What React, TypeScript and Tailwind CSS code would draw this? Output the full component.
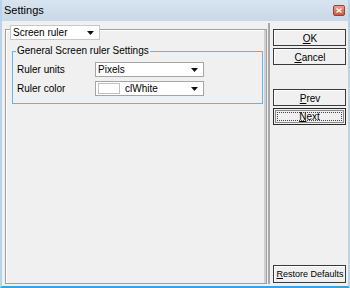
const font = { fontFamily: '"Liberation Sans", Arial, sans-serif' };

function Btn({ label, u, focused = false, className = "", text = "text-[10px]" }: { label: string; u: string; focused?: boolean; className?: string; text?: string }) {
  const rest = label.slice(u.length);
  if (focused) {
    return (
      <div className={"h-[17px] border border-[#2a2a2a] bg-[#f0f0f0] p-[1px] " + className}>
        <div className="h-full border border-[#8a8a8a] p-[1px]">
          <div className={"h-full flex items-center justify-center border border-dotted border-[#444] whitespace-nowrap " + text}>
            <span className="underline">{u}</span>
            {rest}
          </div>
        </div>
      </div>
    );
  }
  return (
    <div className={"h-[17px] border border-[#3a3a3a] bg-[#f0f0f0] " + className}>
      <div className={"h-full flex items-center justify-center text-black border-t border-l border-white whitespace-nowrap " + text}>
        <span className="underline">{u}</span>
        {rest}
      </div>
    </div>
  );
}

function Combo({ children, className = "" }: { children: React.ReactNode; className?: string }) {
  return (
    <div className={"h-[15px] flex items-center bg-white border border-[#a5a5a5] " + className}>
      <div className="flex-1 flex items-center text-[10px] pl-[2px]">{children}</div>
      <svg width="7" height="4" viewBox="0 0 7 4" className="mr-[5px]">
        <path d="M0 0h7L3.5 4z" fill="#111" />
      </svg>
    </div>
  );
}

export default function App() {
  return (
    <div style={font} className="w-[350px] h-[288px] flex flex-col bg-[#f0f0f0] border-l-2 border-r-2 border-b-2 border-l-[#b9d4ea] border-r-[#b9d4ea] border-b-[#3aa3dc] text-black">
      <div className="h-[21px] shrink-0 flex items-center justify-between bg-gradient-to-b from-[#d8e4f0] to-[#c9d8e7] pl-[2px] pr-[3px]">
        <span className="text-[11px]">Settings</span>
        <div className="w-[12px] h-[11px] rounded-[2px] border border-[#a04030] bg-gradient-to-b from-[#e8a090] to-[#c85a40] flex items-center justify-center">
          <svg width="6" height="5" viewBox="0 0 6 5">
            <path d="M0.5 0.5L5.5 4.5M5.5 0.5L0.5 4.5" stroke="#fff" strokeWidth="1.3" />
          </svg>
        </div>
      </div>
      <div className="flex-1 flex pl-[3px] pb-[2px]">
        <div className="flex-1 relative pt-[8px]">
          <div className="h-full border border-[#a0a0a0] shadow-[inset_1px_1px_0_#fff]">
            <div className="h-full border-r-2 border-[#d0d0d0] pt-[21px] pl-[6px] pr-[1px]">
              <div className="border border-[#62b3f1] px-[4px] pt-[8px] pb-[5px] relative">
                <span className="absolute left-[3px] -top-[7px] bg-[#f0f0f0] px-[1px] text-[10px] leading-[12px]">General Screen ruler Settings</span>
                <div className="flex items-center h-[19px]">
                  <span className="w-[78px] text-[10px]">Ruler units</span>
                  <Combo className="w-[109px]">Pixels</Combo>
                </div>
                <div className="flex items-center h-[19px]">
                  <span className="w-[78px] text-[10px]">Ruler color</span>
                  <Combo className="w-[109px]">
                    <span className="w-[22px] h-[11px] border border-[#c0c0c0] bg-white mr-[5px]" />
                    clWhite
                  </Combo>
                </div>
              </div>
            </div>
          </div>
          <Combo className="absolute left-[5px] top-[4px] w-[90px] h-[14px] border-[#c8c8c8]">Screen ruler</Combo>
        </div>
        <div className="w-[2px] bg-[#a8a8a8] ml-[1px] mr-[3px] mt-[2px]" />
        <div className="w-[75px] flex flex-col pt-[8px] pr-[2px]">
          <Btn label="OK" u="O" />
          <Btn label="Cancel" u="C" className="mt-[2px]" />
          <Btn label="Prev" u="P" className="mt-[24px]" />
          <Btn label="Next" u="N" focused className="mt-[2px]" />
          <div className="flex-1" />
          <Btn label="Restore Defaults" u="R" text="text-[9px]" className="mb-[1px] !h-[18px]" />
        </div>
      </div>
    </div>
  );
}
